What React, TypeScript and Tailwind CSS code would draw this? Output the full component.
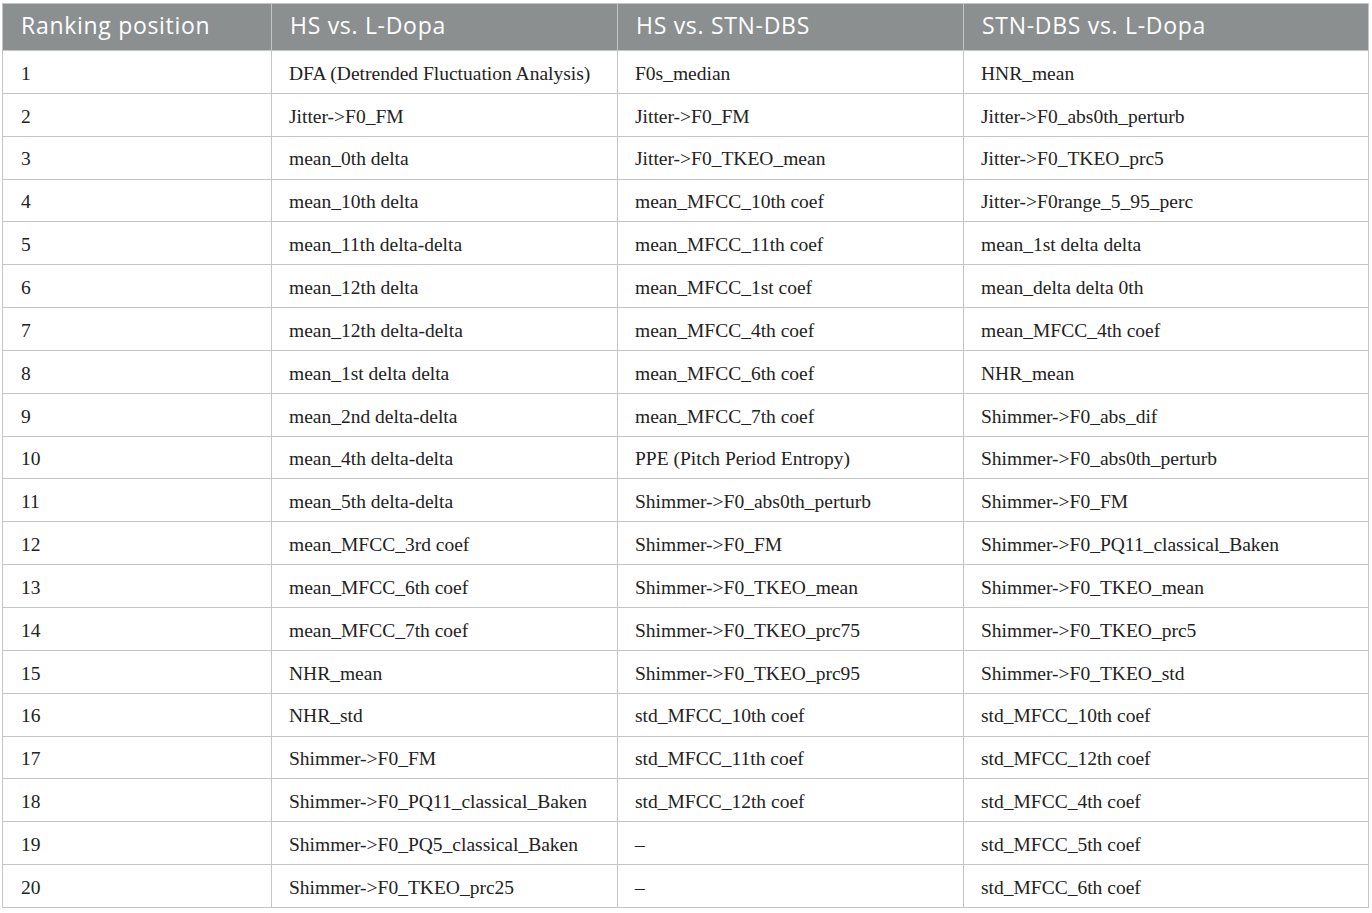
const rows: [string, string, string][] = [
  ['DFA (Detrended Fluctuation Analysis)', 'F0s_median', 'HNR_mean'],
  ['Jitter->F0_FM', 'Jitter->F0_FM', 'Jitter->F0_abs0th_perturb'],
  ['mean_0th delta', 'Jitter->F0_TKEO_mean', 'Jitter->F0_TKEO_prc5'],
  ['mean_10th delta', 'mean_MFCC_10th coef', 'Jitter->F0range_5_95_perc'],
  ['mean_11th delta-delta', 'mean_MFCC_11th coef', 'mean_1st delta delta'],
  ['mean_12th delta', 'mean_MFCC_1st coef', 'mean_delta delta 0th'],
  ['mean_12th delta-delta', 'mean_MFCC_4th coef', 'mean_MFCC_4th coef'],
  ['mean_1st delta delta', 'mean_MFCC_6th coef', 'NHR_mean'],
  ['mean_2nd delta-delta', 'mean_MFCC_7th coef', 'Shimmer->F0_abs_dif'],
  ['mean_4th delta-delta', 'PPE (Pitch Period Entropy)', 'Shimmer->F0_abs0th_perturb'],
  ['mean_5th delta-delta', 'Shimmer->F0_abs0th_perturb', 'Shimmer->F0_FM'],
  ['mean_MFCC_3rd coef', 'Shimmer->F0_FM', 'Shimmer->F0_PQ11_classical_Baken'],
  ['mean_MFCC_6th coef', 'Shimmer->F0_TKEO_mean', 'Shimmer->F0_TKEO_mean'],
  ['mean_MFCC_7th coef', 'Shimmer->F0_TKEO_prc75', 'Shimmer->F0_TKEO_prc5'],
  ['NHR_mean', 'Shimmer->F0_TKEO_prc95', 'Shimmer->F0_TKEO_std'],
  ['NHR_std', 'std_MFCC_10th coef', 'std_MFCC_10th coef'],
  ['Shimmer->F0_FM', 'std_MFCC_11th coef', 'std_MFCC_12th coef'],
  ['Shimmer->F0_PQ11_classical_Baken', 'std_MFCC_12th coef', 'std_MFCC_4th coef'],
  ['Shimmer->F0_PQ5_classical_Baken', '–', 'std_MFCC_5th coef'],
  ['Shimmer->F0_TKEO_prc25', '–', 'std_MFCC_6th coef'],
];

const headers = ['Ranking position', 'HS vs. L-Dopa', 'HS vs. STN-DBS', 'STN-DBS vs. L-Dopa'];

export default function App() {
  return (
    <div className="bg-white w-[1372px] h-[913px] pl-[2px] pt-[3px]">
      <table className="w-[1367px] border-collapse table-fixed border border-[#c3c6c5]">
        <colgroup>
          <col className="w-[269px]" />
          <col className="w-[346px]" />
          <col className="w-[346px]" />
          <col />
        </colgroup>
        <thead>
          <tr className="bg-[#8b8f90] h-[47px]">
            {headers.map((h) => (
              <th
                key={h}
                className="border border-[#c3c6c5] text-left font-normal text-white pl-[18px] pb-[3px] text-[23px] tracking-[0.7px] font-['Open_Sans',sans-serif]"
              >
                {h}
              </th>
            ))}
          </tr>
        </thead>
        <tbody>
          {rows.map((r, i) => (
            <tr key={i} className="h-[42.85px]">
              <td className="border border-[#c3c6c5] pl-[18px] pt-[3px] text-[19.5px] text-[#222] font-['Liberation_Serif',serif]">
                {i + 1}
              </td>
              {r.map((c, j) => (
                <td
                  key={j}
                  className="border border-[#c3c6c5] pl-[17px] pt-[3px] text-[19.5px] text-[#222] font-['Liberation_Serif',serif]"
                >
                  {c}
                </td>
              ))}
            </tr>
          ))}
        </tbody>
      </table>
    </div>
  );
}
